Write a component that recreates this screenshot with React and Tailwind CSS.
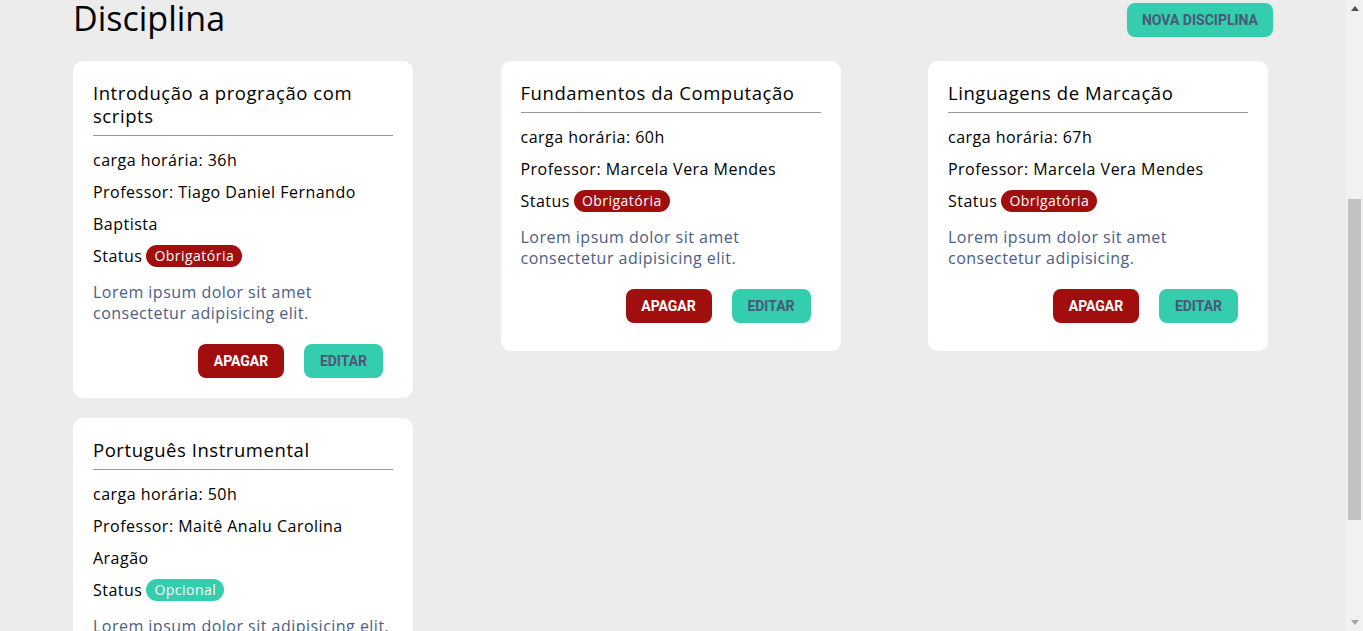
const disciplinas = [
  {
    nome: "Introdução a progração com scripts",
    carga: "36h",
    professor: "Tiago Daniel Fernando Baptista",
    status: "Obrigatória",
    descricao: "Lorem ipsum dolor sit amet consectetur adipisicing elit.",
  },
  {
    nome: "Fundamentos da Computação",
    carga: "60h",
    professor: "Marcela Vera Mendes",
    status: "Obrigatória",
    descricao: "Lorem ipsum dolor sit amet consectetur adipisicing elit.",
  },
  {
    nome: "Linguagens de Marcação",
    carga: "67h",
    professor: "Marcela Vera Mendes",
    status: "Obrigatória",
    descricao: "Lorem ipsum dolor sit amet consectetur adipisicing.",
  },
  {
    nome: "Português Instrumental",
    carga: "50h",
    professor: "Maitê Analu Carolina Aragão",
    status: "Opcional",
    descricao: "Lorem ipsum dolor sit adipisicing elit.",
  },
];

function Card({ d }) {
  const obrigatoria = d.status === "Obrigatória";
  return (
    <div className="bg-white rounded-[10px] min-h-[290px] p-5 text-black">
      <h2 className="text-[18.5px] leading-[23px] tracking-[0.03em] pb-2 border-b border-[#999]">{d.nome}</h2>
      <p className="mt-2 leading-8">carga horária: {d.carga}</p>
      <p className="leading-8">Professor: {d.professor}</p>
      <p className="leading-8 flex items-center gap-1">
        Status
        <span
          className={
            obrigatoria
              ? "bg-[#a10e0e] text-white text-sm leading-[22px] px-2 rounded-full"
              : "bg-[#34cdad] text-white text-sm leading-[22px] px-2 rounded-full"
          }
        >
          {d.status}
        </span>
      </p>
      <p className="mt-[10px] leading-[21px] text-[#4b5d86]">{d.descricao}</p>
      <div className="mt-5 pr-[10px] flex justify-end gap-5 font-['Roboto',sans-serif] font-bold text-sm tracking-normal">
        <button className="h-[34px] w-[86px] rounded-lg bg-[#a10e0e] text-white">APAGAR</button>
        <button className="h-[34px] w-[79px] rounded-lg bg-[#34cdad] text-[#4a5878]">EDITAR</button>
      </div>
    </div>
  );
}

function Scrollbar() {
  return (
    <div className="w-[17px] shrink-0 bg-[#f1f1f1] flex flex-col">
      <div className="h-[17px] flex items-center justify-center">
        <svg width="8" height="5" viewBox="0 0 8 5">
          <path d="M0 5 L4 0 L8 5 Z" fill="#505050" />
        </svg>
      </div>
      <div className="flex-1 px-[2px]">
        <div className="mt-[182px] h-[321px] bg-[#c1c1c1]" />
      </div>
      <div className="h-[17px] flex items-center justify-center">
        <svg width="8" height="5" viewBox="0 0 8 5">
          <path d="M0 0 L8 0 L4 5 Z" fill="#a3a3a3" />
        </svg>
      </div>
    </div>
  );
}

export default function App() {
  return (
    <div className="h-screen flex overflow-hidden bg-[#ececec] font-['Open_Sans',sans-serif] text-base tracking-[0.03em]">
      <div className="flex-1 min-w-0">
        <main className="max-w-[1200px] mx-auto">
          <div className="flex justify-between items-start">
            <h1 className="text-[34px] leading-9 tracking-normal text-black">Disciplina</h1>
            <button className="mt-[3px] h-[34px] px-[15px] rounded-lg bg-[#34cdad] text-[#4a5878] font-['Roboto',sans-serif] font-bold text-sm tracking-normal">
              NOVA DISCIPLINA
            </button>
          </div>
          <div className="mt-6 grid grid-cols-[repeat(3,340px)] gap-x-[87.5px] gap-y-5 items-start">
            {disciplinas.map((d) => (
              <Card key={d.nome} d={d} />
            ))}
          </div>
        </main>
      </div>
      <Scrollbar />
    </div>
  );
}
